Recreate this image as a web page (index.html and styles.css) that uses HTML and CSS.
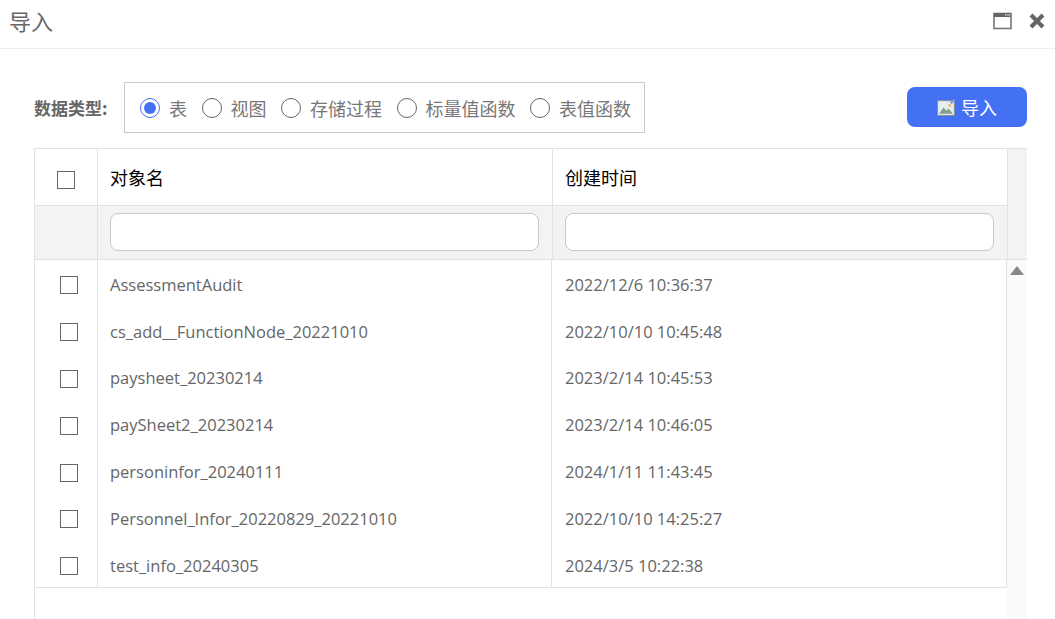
FILE: index.html
```html
<!DOCTYPE html>
<html lang="zh">
<head>
<meta charset="utf-8">
<title>导入</title>
<link rel="stylesheet" href="styles.css">
</head>
<body>
<header class="titlebar">
  <span class="title">导入</span>
  <div class="win-tools">
    <svg class="ico-max" width="20" height="18" viewBox="0 0 20 18"><rect x="1" y="1.5" width="17" height="15" fill="#fff" stroke="#777" stroke-width="1.6"/><rect x="1" y="1" width="17" height="4" fill="#666"/><rect x="12" y="2.2" width="1.4" height="1.4" fill="#ddd"/><rect x="14.2" y="2.2" width="1.4" height="1.4" fill="#ddd"/><rect x="16" y="2.2" width="1.2" height="1.4" fill="#ddd"/></svg>
    <svg class="ico-close" width="18" height="18" viewBox="0 0 18 18"><path d="M3 3L15 15M15 3L3 15" stroke="#666" stroke-width="4.2" fill="none"/></svg>
  </div>
</header>
<main class="content">
  <div class="toolbar">
    <span class="type-label">数据类型:</span>
    <div class="radio-box">
      <span class="radio checked"></span><span class="radio-text">表</span>
      <span class="radio"></span><span class="radio-text">视图</span>
      <span class="radio"></span><span class="radio-text">存储过程</span>
      <span class="radio"></span><span class="radio-text">标量值函数</span>
      <span class="radio"></span><span class="radio-text">表值函数</span>
    </div>
    <button class="import-btn">
      <svg width="19" height="19" viewBox="0 0 18 18"><rect x="0.5" y="2.5" width="16" height="14" fill="#e8eef0" stroke="#8a8f96"/><path d="M2 15L6 9l3 3 2-2 4 5z" fill="#7fa08e"/><circle cx="12" cy="7" r="1.6" fill="#e8c877"/><path d="M12 4l4-3 1 1-3 4z" fill="#7d9be0"/></svg>
      <span>导入</span>
    </button>
  </div>
  <div class="grid-wrap">
    <div class="grid-head">
      <div class="head-cols">
        <div class="row head-row">
          <div class="cell chk"><span class="checkbox"></span></div>
          <div class="cell name head-text">对象名</div>
          <div class="cell time head-text">创建时间</div>
        </div>
        <div class="row filter-row">
          <div class="cell chk"></div>
          <div class="cell name"><input class="filter" type="text"></div>
          <div class="cell time"><input class="filter" type="text"></div>
        </div>
      </div>
      <div class="scroll-corner"></div>
    </div>
    <div class="grid-body">
      <div class="rows">
        <div class="row data"><div class="cell chk"><span class="checkbox"></span></div><div class="cell name">AssessmentAudit</div><div class="cell time">2022/12/6 10:36:37</div></div>
        <div class="row data"><div class="cell chk"><span class="checkbox"></span></div><div class="cell name">cs_add__FunctionNode_20221010</div><div class="cell time">2022/10/10 10:45:48</div></div>
        <div class="row data"><div class="cell chk"><span class="checkbox"></span></div><div class="cell name">paysheet_20230214</div><div class="cell time">2023/2/14 10:45:53</div></div>
        <div class="row data"><div class="cell chk"><span class="checkbox"></span></div><div class="cell name">paySheet2_20230214</div><div class="cell time">2023/2/14 10:46:05</div></div>
        <div class="row data"><div class="cell chk"><span class="checkbox"></span></div><div class="cell name">personinfor_20240111</div><div class="cell time">2024/1/11 11:43:45</div></div>
        <div class="row data"><div class="cell chk"><span class="checkbox"></span></div><div class="cell name">Personnel_Infor_20220829_20221010</div><div class="cell time">2022/10/10 14:25:27</div></div>
        <div class="row data"><div class="cell chk"><span class="checkbox"></span></div><div class="cell name">test_info_20240305</div><div class="cell time">2024/3/5 10:22:38</div></div>
      </div>
      <div class="scrollbar"><span class="arrow-up"></span></div>
    </div>
  </div>
</main>
</body>
</html>
```
FILE: styles.css
```css
* { box-sizing: border-box; }
html, body { margin: 0; height: 100%; overflow: hidden; }
body {
  background: #fff;
  color: #666;
  font-family: "Open Sans", "Noto Sans CJK SC", sans-serif;
  font-size: 16px;
}
.titlebar {
  height: 49px;
  border-bottom: 1px solid #eee;
  display: flex;
  align-items: center;
  justify-content: space-between;
  padding: 0 9px 5px 9px;
}
.title { font-size: 22px; color: #666; line-height: 1; font-family: "Noto Sans CJK SC", sans-serif; margin-top: -4px; }
.win-tools { display: flex; align-items: center; gap: 15px; padding-bottom: 2px; }
.ico-max, .ico-close { display: block; }
.content { padding: 33px 28px 0 34px; }
.toolbar { display: flex; align-items: center; height: 51px; }
.type-label {
  font-family: "Noto Sans CJK SC", sans-serif;
  font-weight: 700;
  font-size: 17px;
  color: #666;
  width: 90px;
  white-space: nowrap;
}
.radio-box {
  width: 521px;
  height: 51px;
  border: 1px solid #c8c8c8;
  display: flex;
  align-items: center;
  padding-left: 15px;
  font-family: "Noto Sans CJK SC", sans-serif;
  font-size: 18px;
  color: #777;
}
.radio {
  width: 20px;
  height: 20px;
  border-radius: 50%;
  border: 1px solid #666;
  background: #fff;
  flex: none;
  margin-right: 9px;
  position: relative;
}
.radio.checked { border-color: #4470f4; }
.radio.checked::after {
  content: "";
  position: absolute;
  inset: 3px;
  border-radius: 50%;
  background: #4470f4;
}
.radio-text { margin-right: 14.5px; white-space: nowrap; line-height: 1; }
.import-btn {
  margin-left: auto;
  margin-top: -1px;
  width: 120px;
  height: 40px;
  border: 0;
  border-radius: 8px;
  background: #4470f4;
  color: #fff;
  font-family: "Noto Sans CJK SC", sans-serif;
  font-size: 18px;
  display: flex;
  align-items: center;
  justify-content: center;
  gap: 5px;
  padding: 0;
}
.grid-wrap { margin-top: 15px; width: 993px; height: 480px; border-left: 1px solid #e2e2e2; display: flex; flex-direction: column; }
.grid-head { display: flex; height: 112px; border-top: 1px solid #e2e2e2; border-bottom: 1px solid #e2e2e2; }
.head-cols { width: 973px; flex: none; }
.row { display: flex; }
.cell { display: flex; align-items: center; padding-left: 12px; border-right: 1px solid #e2e2e2; }
.chk { width: 63px; flex: none; padding: 0; justify-content: center; }
.name { width: 455px; flex: none; }
.time { width: 455px; flex: none; }
.head-row { height: 57px; background: #fff; border-bottom: 1px solid #e2e2e2; }
.head-row .chk { padding-top: 5px; }
.head-text { color: #000; font-family: "Noto Sans CJK SC", sans-serif; font-size: 18px; }
.filter-row { height: 53px; background: #f3f3f3; }
.filter {
  display: block;
  width: 429px;
  height: 38px;
  border: 1px solid #c8c8c8;
  border-radius: 8px;
  background: #fff;
  margin-top: -1px;
}
.scroll-corner { flex: 1; background: #f3f3f3; }
.grid-body { display: flex; flex: 1; }
.rows { width: 972px; flex: none; height: 328px; border-bottom: 1px solid #e2e2e2; border-right: 1px solid #e2e2e2; }
.data { height: 46.8px; }
.data .cell { color: #666; font-size: 16.5px; padding-top: 2px; }
.data .cell.chk { padding-left: 6px; padding-top: 4px; }
.data .cell.name { width: 454px; }
.data .cell.time { width: 455px; border-right: 0; padding-left: 13px; }
.checkbox { width: 18px; height: 18px; border: 1.5px solid #666; background: #fff; display: block; }
.scrollbar { flex: 1; background: #fafafa; display: flex; justify-content: center; padding-top: 6px; height: 100%; }
.arrow-up {
  width: 0;
  height: 0;
  border-left: 7px solid transparent;
  border-right: 7px solid transparent;
  border-bottom: 9px solid #888;
}
```
